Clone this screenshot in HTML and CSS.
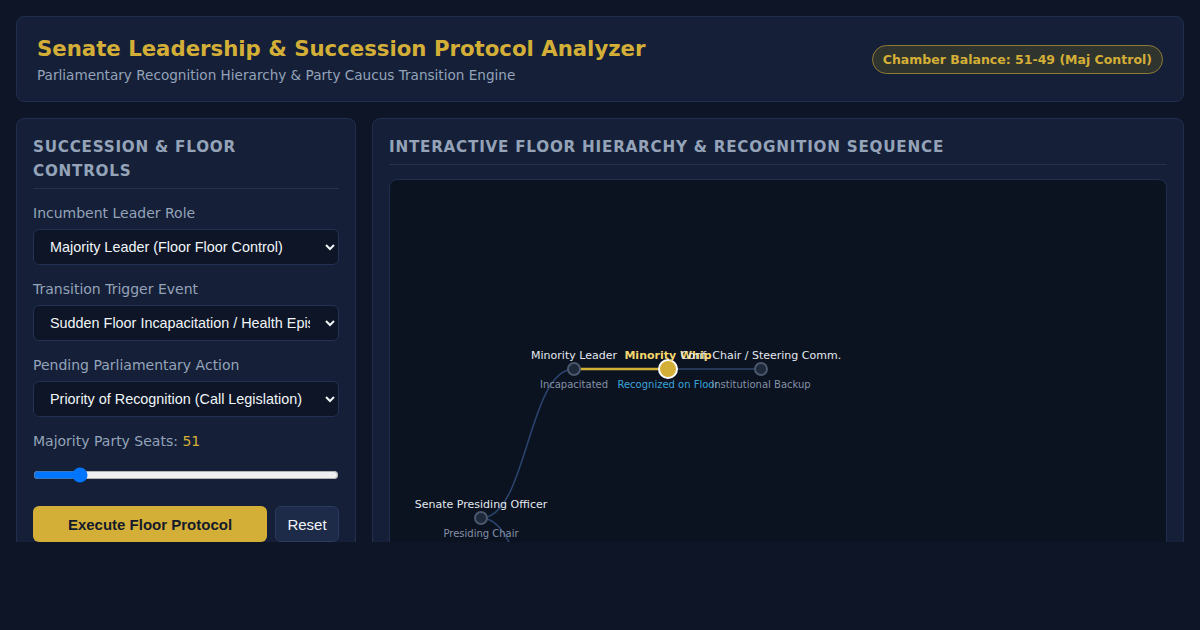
FILE: index.html
```html
<!DOCTYPE html>
<html lang="en">
<head>
    <meta charset="UTF-8">
    <meta name="viewport" content="width=device-width, initial-scale=1.0">
    <title>Senate Leadership &amp; Succession Protocol Analyzer</title>
    <link rel="stylesheet" href="styles.css">
</head>
<body>
    <header class="app-header">
        <div class="titles">
            <h1>Senate Leadership &amp; Succession Protocol Analyzer</h1>
            <p>Parliamentary Recognition Hierarchy &amp; Party Caucus Transition Engine</p>
        </div>
        <span class="balance-badge">Chamber Balance: 51-49 (Maj Control)</span>
    </header>

    <main class="workspace">
        <section class="panel controls">
            <h2 class="panel-title">Succession &amp; Floor Controls</h2>

            <div class="field">
                <label for="leaderRole">Incumbent Leader Role</label>
                <select id="leaderRole">
                    <option>Majority Leader (Floor Floor Control)</option>
                    <option>Minority Leader</option>
                    <option>Majority Whip</option>
                </select>
            </div>

            <div class="field">
                <label for="triggerEvent">Transition Trigger Event</label>
                <select id="triggerEvent">
                    <option>Sudden Floor Incapacitation / Health Episode</option>
                    <option>Resignation from Leadership</option>
                    <option>Caucus Leadership Election</option>
                </select>
            </div>

            <div class="field">
                <label for="pendingAction">Pending Parliamentary Action</label>
                <select id="pendingAction">
                    <option>Priority of Recognition (Call Legislation)</option>
                    <option>Motion to Proceed</option>
                    <option>Cloture Filing</option>
                </select>
            </div>

            <div class="field">
                <label for="seats">Majority Party Seats: <span class="seat-count">51</span></label>
                <input type="range" id="seats" min="45" max="90" value="51">
            </div>

            <div class="actions">
                <button class="btn-primary">Execute Floor Protocol</button>
                <button class="btn-secondary">Reset</button>
            </div>
        </section>

        <section class="panel hierarchy">
            <h2 class="panel-title">Interactive Floor Hierarchy &amp; Recognition Sequence</h2>

            <div class="canvas">
                <svg class="tree" width="776" height="480" viewBox="0 0 776 480">
                    <!-- links -->
                    <path class="link" d="M91,338 C137.5,338 137.5,189 184,189"/>
                    <path class="link" d="M91,338 C137.5,338 137.5,487 184,487"/>
                    <line class="link-active" x1="184" y1="189" x2="278" y2="189"/>
                    <line class="link-idle" x1="278" y1="189" x2="371" y2="189"/>

                    <!-- presiding officer -->
                    <g transform="translate(91,338)">
                        <circle class="node" r="6"/>
                        <text class="node-label" y="-10">Senate Presiding Officer</text>
                        <text class="node-sub" y="19">Presiding Chair</text>
                    </g>

                    <!-- minority leader -->
                    <g transform="translate(184,189)">
                        <circle class="node" r="6"/>
                        <text class="node-label" y="-10">Minority Leader</text>
                        <text class="node-sub" y="19">Incapacitated</text>
                    </g>

                    <!-- minority whip (recognized) -->
                    <g transform="translate(278,189)">
                        <circle class="node node-active" r="9"/>
                        <text class="node-label label-active" y="-10">Minority Whip</text>
                        <text class="node-sub sub-active" y="19">Recognized on Floor</text>
                    </g>

                    <!-- conference chair -->
                    <g transform="translate(371,189)">
                        <circle class="node" r="6"/>
                        <text class="node-label" y="-10">Conf. Chair / Steering Comm.</text>
                        <text class="node-sub" y="19">Institutional Backup</text>
                    </g>
                </svg>
            </div>
        </section>
    </main>
</body>
</html>
```

FILE: styles.css
```css
body {
    font-family: 'DejaVu Sans', Verdana, sans-serif;
    background: #0e1527;
    color: #e2e8f0;
    margin: 0;
    padding: 16px;
}
.app-header {
    display: flex;
    align-items: center;
    justify-content: space-between;
    background: #152038;
    border: 1px solid #1f2e4d;
    border-radius: 8px;
    padding: 19px 20px 18px 20px;
}
.app-header h1 {
    font-size: 21.25px;
    margin: 0 0 6px 0;
    color: #d4af37;
}
.app-header p {
    font-size: 13.6px;
    margin: 0;
    color: #94a3b8;
}
.balance-badge {
    font-size: 12.5px;
    font-weight: bold;
    color: #d4af37;
    background: #30342f;
    border: 1px solid #8f7a33;
    border-radius: 20px;
    padding: 6px 10px;
}
.workspace {
    display: grid;
    grid-template-columns: 340px 1fr;
    gap: 16px;
    align-items: start;
    margin-top: 16px;
    height: 424px;
    overflow: hidden;
}
.panel {
    background: #152038;
    border: 1px solid #1f2e4d;
    border-radius: 8px;
    padding: 16px 16px 16px 16px;
}
.panel-title {
    font-size: 15.2px;
    line-height: 24px;
    letter-spacing: 0.76px;
    text-transform: uppercase;
    color: #94a3b8;
    margin: 0 0 14px 0;
    padding-bottom: 5px;
    border-bottom: 1px solid #23324f;
}
.field {
    margin-bottom: 14px;
}
.field label {
    display: block;
    font-size: 14px;
    line-height: 20px;
    color: #94a3b8;
    margin-bottom: 6px;
}
.seat-count {
    color: #d4af37;
}
.field select {
    display: block;
    width: 100%;
    height: 36px;
    padding: 0 12px;
    font-family: 'Liberation Sans', Arial, sans-serif;
    font-size: 14.4px;
    color: #f1f5f9;
    background: #0d1526;
    border: 1px solid #223152;
    border-radius: 6px;
}
.field input[type=range] {
    display: block;
    width: 100%;
    margin: 16px 0 0 0;
}
.actions {
    display: flex;
    gap: 8px;
    margin-top: 23px;
}
.btn-primary, .btn-secondary {
    font-family: 'Liberation Sans', Arial, sans-serif;
    font-size: 15px;
    height: 36px;
    border-radius: 6px;
    cursor: pointer;
}
.btn-primary {
    flex: 1;
    font-weight: bold;
    color: #151a2b;
    background: #d4af37;
    border: none;
}
.btn-secondary {
    width: 64px;
    color: #f1f5f9;
    background: #1e2b48;
    border: 1px solid #2a3a5c;
}
.canvas {
    height: 480px;
    margin-top: 4px;
    background: #0c1320;
    border: 1px solid #1f2e4d;
    border-radius: 8px;
    overflow: hidden;
}
.tree {
    display: block;
}
.link {
    fill: none;
    stroke: #2b4570;
    stroke-width: 1.5;
}
.link-active {
    stroke: #d4af37;
    stroke-width: 2.5;
}
.link-idle {
    stroke: #273857;
    stroke-width: 2;
}
.node {
    fill: #1e293b;
    stroke: #4a576c;
    stroke-width: 2;
}
.node-active {
    fill: #d4af37;
    stroke: #ffffff;
}
.node-label {
    font-family: 'DejaVu Sans', sans-serif;
    font-size: 11px;
    fill: #e2e8f0;
    text-anchor: middle;
}
.label-active {
    font-weight: bold;
    fill: #f5d76e;
}
.node-sub {
    font-family: 'DejaVu Sans', sans-serif;
    font-size: 10px;
    fill: #8391a7;
    text-anchor: middle;
}
.sub-active {
    fill: #3aa3dc;
}
```
